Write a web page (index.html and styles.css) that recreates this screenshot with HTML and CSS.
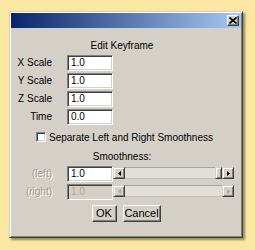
FILE: index.html
```html
<!DOCTYPE html>
<html>
<head>
<meta charset="utf-8">
<link rel="stylesheet" href="styles.css">
</head>
<body>
<div class="window">
  <div class="titlebar">
    <div class="close">
      <svg width="8" height="7" viewBox="0 0 8 7"><path d="M0.5 0.5 L7.5 6.5 M7.5 0.5 L0.5 6.5" stroke="#000" stroke-width="1.6"/></svg>
    </div>
  </div>
  <div class="content">
    <div class="heading">Edit Keyframe</div>
    <div class="fields">
      <div class="row"><span class="label">X Scale</span><span class="field">1.0</span></div>
      <div class="row"><span class="label">Y Scale</span><span class="field">1.0</span></div>
      <div class="row"><span class="label">Z Scale</span><span class="field">1.0</span></div>
      <div class="row"><span class="label">Time</span><span class="field">0.0</span></div>
    </div>
    <div class="check-row"><span class="checkbox"></span><span>Separate Left and Right Smoothness</span></div>
    <div class="heading sub">Smoothness:</div>
    <div class="fields">
      <div class="row">
        <span class="label disabled">(left)</span><span class="field">1.0</span>
        <div class="scrollbar">
          <span class="sbtn"><svg width="3" height="5" viewBox="0 0 3 5"><path d="M3 0 L0 2.5 L3 5 Z" fill="#000"/></svg></span>
          <span class="track"><span class="thumb"></span></span>
          <span class="sbtn"><svg width="3" height="5" viewBox="0 0 3 5"><path d="M0 0 L3 2.5 L0 5 Z" fill="#000"/></svg></span>
        </div>
      </div>
      <div class="row">
        <span class="label disabled">(right)</span><span class="field off">1.0</span>
        <div class="scrollbar">
          <span class="sbtn"><svg width="3" height="5" viewBox="0 0 3 5"><path d="M3 0 L0 2.5 L3 5 Z" fill="#a9a69f"/></svg></span>
          <span class="track"></span>
          <span class="sbtn"><svg width="3" height="5" viewBox="0 0 3 5"><path d="M0 0 L3 2.5 L0 5 Z" fill="#a9a69f"/></svg></span>
        </div>
      </div>
    </div>
    <div class="buttons">
      <span class="btn ok">OK</span><span class="btn cancel">Cancel</span>
    </div>
  </div>
</div>
</body>
</html>
```
FILE: styles.css
```css
html, body {
  margin: 0;
  padding: 0;
}
body {
  background: #fae8a2;
  width: 255px;
  height: 250px;
  padding: 11px 0 0 9px;
  box-sizing: border-box;
  font-family: "Liberation Sans", Arial, sans-serif;
  font-size: 10px;
  color: #000;
}
.window {
  width: 234px;
  height: 227px;
  box-sizing: border-box;
  background: #d4d0c8;
  border: 1px solid;
  border-color: #d4d0c8 #404040 #404040 #d4d0c8;
  box-shadow: inset 1px 1px #fff, inset -1px -1px #808080, 2px 2px 2px rgba(70, 60, 10, 0.55);
  padding: 1px;
  display: flex;
  flex-direction: column;
}
.titlebar {
  height: 15px;
  background: linear-gradient(to right, #0a246a, #a6caf0);
  display: flex;
  justify-content: flex-end;
  align-items: center;
  padding-right: 2px;
}
.close {
  width: 12px;
  height: 11px;
  box-sizing: border-box;
  background: #d4d0c8;
  border: 1px solid;
  border-color: #fff #404040 #404040 #fff;
  box-shadow: inset -1px -1px #808080;
  display: flex;
  align-items: center;
  justify-content: center;
}
.close svg { display: block; }
.content {
  display: flex;
  flex-direction: column;
  padding-top: 12px;
}
.heading {
  line-height: 12px;
  height: 12px;
  text-align: center;
  padding-right: 8px;
}
.fields {
  display: flex;
  flex-direction: column;
  gap: 2px;
  margin-top: 3px;
}
.row {
  display: flex;
  align-items: center;
  height: 16px;
}
.label {
  width: 41px;
  text-align: right;
  margin-right: 15px;
  line-height: 12px;
}
.label.disabled {
  color: #9c998f;
  text-shadow: 1px 1px #fff;
}
.field {
  width: 46px;
  height: 16px;
  box-sizing: border-box;
  background: #fff;
  border: 1px solid;
  border-color: #808080 #fff #fff #808080;
  box-shadow: inset 1px 1px #404040, inset -1px -1px #d4d0c8;
  padding-left: 3px;
  line-height: 14px;
}
.field.off {
  background: #d4d0c8;
  color: #a9a69f;
}
.check-row {
  display: flex;
  align-items: center;
  justify-content: center;
  gap: 3px;
  height: 12px;
  margin-top: 6px;
  padding-right: 3px;
}
.checkbox {
  width: 10px;
  height: 10px;
  box-sizing: border-box;
  background: #fff;
  border: 1px solid;
  border-color: #808080 #fff #fff #808080;
  box-shadow: inset 1px 1px #404040, inset -1px -1px #d4d0c8;
}
.sub {
  margin-top: 8px;
}
.scrollbar {
  display: flex;
  width: 121px;
  height: 12px;
  align-self: flex-start;
  margin-top: 1px;
}
.sbtn {
  width: 12px;
  height: 12px;
  box-sizing: border-box;
  background: #d4d0c8;
  border: 1px solid;
  border-color: #d4d0c8 #404040 #404040 #d4d0c8;
  box-shadow: inset 1px 1px #fff, inset -1px -1px #808080;
  display: flex;
  align-items: center;
  justify-content: center;
}
.sbtn svg { display: block; }
.track {
  flex: 1;
  background: #e2dfd8;
  border-top: 1px solid #a8a59e;
  border-bottom: 1px solid #c4c1ba;
  display: flex;
  justify-content: flex-end;
}
.thumb {
  width: 7px;
  margin-top: -1px;
  margin-bottom: -1px;
  box-sizing: border-box;
  background: #d4d0c8;
  border: 1px solid;
  border-color: #d4d0c8 #404040 #404040 #d4d0c8;
  box-shadow: inset 1px 1px #fff, inset -1px -1px #808080;
}
.buttons {
  display: flex;
  justify-content: center;
  gap: 6px;
  margin-top: 5px;
}
.btn {
  height: 17px;
  box-sizing: border-box;
  border: 1px solid;
  border-color: #fff #404040 #404040 #fff;
  box-shadow: inset -1px -1px #808080;
  line-height: 15px;
  text-align: center;
  font-size: 11px;
}
.ok { width: 25px; }
.cancel { width: 38px; }
```
